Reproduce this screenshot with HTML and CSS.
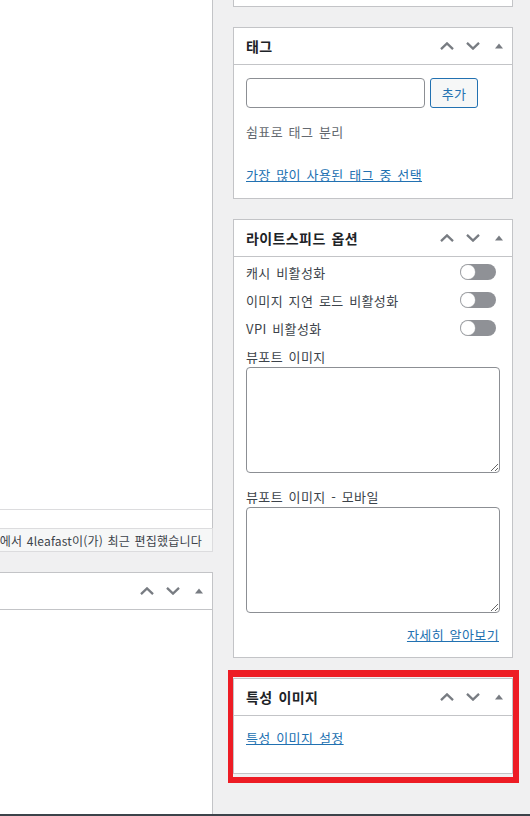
FILE: index.html
```html
<!DOCTYPE html>
<html lang="ko">
<head>
<meta charset="utf-8">
<title>편집</title>
<link rel="stylesheet" href="styles.css">
</head>
<body>
<div class="screen">
  <div class="main">
    <div class="editor"><div class="editor-frame"></div></div>
    <div class="status-info"><span>에서 4leafast이(가) 최근 편집했습니다</span></div>
    <div class="postbox main-box">
      <div class="postbox-header">
        <h2 class="hndle"></h2>
        <div class="handle-actions">
          <span class="hbtn"><svg width="14" height="8" viewBox="0 0 14 8"><polyline points="1,7.2 7,1.4 13,7.2" /></svg></span>
          <span class="hbtn"><svg width="14" height="8" viewBox="0 0 14 8"><polyline points="1,0.8 7,6.6 13,0.8" /></svg></span>
          <span class="hbtn"><svg class="tri" width="8" height="6" viewBox="0 0 8 6"><polygon points="0,5.5 4,0.5 8,5.5" /></svg></span>
        </div>
      </div>
      <div class="inside"></div>
    </div>
  </div>

  <div class="side">
    <div class="postbox stub"></div>

    <div class="postbox">
      <div class="postbox-header">
        <h2 class="hndle">태그</h2>
        <div class="handle-actions">
          <span class="hbtn"><svg width="14" height="8" viewBox="0 0 14 8"><polyline points="1,7.2 7,1.4 13,7.2" /></svg></span>
          <span class="hbtn"><svg width="14" height="8" viewBox="0 0 14 8"><polyline points="1,0.8 7,6.6 13,0.8" /></svg></span>
          <span class="hbtn"><svg class="tri" width="8" height="6" viewBox="0 0 8 6"><polygon points="0,5.5 4,0.5 8,5.5" /></svg></span>
        </div>
      </div>
      <div class="inside tags-inside">
        <div class="tag-row">
          <input class="tag-input" type="text">
          <button class="tag-add" type="button">추가</button>
        </div>
        <p class="howto">쉼표로 태그 분리</p>
        <a class="link tag-cloud-link" href="#">가장 많이 사용된 태그 중 선택</a>
      </div>
    </div>

    <div class="postbox">
      <div class="postbox-header">
        <h2 class="hndle">라이트스피드 옵션</h2>
        <div class="handle-actions">
          <span class="hbtn"><svg width="14" height="8" viewBox="0 0 14 8"><polyline points="1,7.2 7,1.4 13,7.2" /></svg></span>
          <span class="hbtn"><svg width="14" height="8" viewBox="0 0 14 8"><polyline points="1,0.8 7,6.6 13,0.8" /></svg></span>
          <span class="hbtn"><svg class="tri" width="8" height="6" viewBox="0 0 8 6"><polygon points="0,5.5 4,0.5 8,5.5" /></svg></span>
        </div>
      </div>
      <div class="inside ls-inside">
        <div class="opt-row"><span>캐시 비활성화</span><span class="toggle"><span class="knob"></span></span></div>
        <div class="opt-row"><span>이미지 지연 로드 비활성화</span><span class="toggle"><span class="knob"></span></span></div>
        <div class="opt-row"><span>VPI 비활성화</span><span class="toggle"><span class="knob"></span></span></div>
        <label class="field-label first">뷰포트 이미지</label>
        <textarea class="vpi-text"></textarea>
        <label class="field-label second">뷰포트 이미지 - 모바일</label>
        <textarea class="vpi-text"></textarea>
        <div class="learn-more"><a class="link" href="#">자세히 알아보기</a></div>
      </div>
    </div>

    <div class="postbox">
      <div class="postbox-header">
        <h2 class="hndle">특성 이미지</h2>
        <div class="handle-actions">
          <span class="hbtn"><svg width="14" height="8" viewBox="0 0 14 8"><polyline points="1,7.2 7,1.4 13,7.2" /></svg></span>
          <span class="hbtn"><svg width="14" height="8" viewBox="0 0 14 8"><polyline points="1,0.8 7,6.6 13,0.8" /></svg></span>
          <span class="hbtn"><svg class="tri" width="8" height="6" viewBox="0 0 8 6"><polygon points="0,5.5 4,0.5 8,5.5" /></svg></span>
        </div>
      </div>
      <div class="inside featured-inside">
        <a class="link" href="#">특성 이미지 설정</a>
      </div>
    </div>
  </div>

  <div class="highlight"></div>
</div>
<div class="bottom-bar"></div>
</body>
</html>
```

FILE: styles.css
```css
* { box-sizing: border-box; }

html, body {
  margin: 0;
  padding: 0;
}

body {
  width: 530px;
  height: 816px;
  overflow: hidden;
  background: #f0f0f1;
  font-family: "Noto Sans CJK KR", "Noto Sans", sans-serif;
  font-size: 13px;
  letter-spacing: 0.4px;
  word-spacing: 1.5px;
  color: #3c434a;
}

.screen {
  position: relative;
  display: flex;
  height: 814px;
  overflow: hidden;
}

.main {
  width: 213px;
  flex: none;
  display: flex;
  flex-direction: column;
}

.editor {
  height: 528px;
  background: #fff;
  border-right: 1px solid #c3c4c7;
}

.editor-frame {
  height: 510px;
  border-bottom: 1px solid #dcdcde;
}

.status-info {
  height: 24px;
  display: flex;
  justify-content: flex-end;
  align-items: center;
  overflow: hidden;
  white-space: nowrap;
  background: #f6f7f7;
  border: 1px solid #dcdcde;
  border-left: none;
  padding-right: 10px;
  font-size: 12px;
  letter-spacing: 0.2px;
  word-spacing: 1px;
  color: #3c434a;
}

.side {
  width: 280px;
  flex: none;
  margin-left: 20px;
  display: flex;
  flex-direction: column;
}

.postbox {
  background: #fff;
  border: 1px solid #c3c4c7;
  margin-bottom: 20px;
}

.stub {
  height: 7px;
  border-top: none;
}

.main-box {
  margin-top: 20px;
  margin-bottom: 0;
  flex: 1;
  border-left: none;
  border-bottom: none;
}

.postbox-header {
  height: 37px;
  display: flex;
  align-items: center;
  justify-content: space-between;
  border-bottom: 1px solid #c3c4c7;
}

.hndle {
  margin: 0;
  padding: 0 12px;
  font-size: 14px;
  font-weight: 600;
  line-height: 36px;
  color: #1d2327;
}

.handle-actions {
  display: flex;
  height: 36px;
}

.hbtn {
  width: 26px;
  height: 36px;
  display: flex;
  align-items: center;
  justify-content: center;
}

.hbtn polyline {
  fill: none;
  stroke: #787c82;
  stroke-width: 2.3;
}

.hbtn polygon {
  fill: #787c82;
}

.inside {
  padding: 0 12px;
}

.link {
  color: #2271b1;
  text-decoration: underline;
  line-height: 20px;
}

/* tags */
.tags-inside {
  padding-top: 13px;
  padding-bottom: 13px;
}

.tag-row {
  display: flex;
  gap: 5px;
}

.tag-input {
  width: 179px;
  height: 30px;
  margin: 0;
  border: 1px solid #8c8f94;
  border-radius: 4px;
  background: #fff;
}

.tag-add {
  width: 48px;
  height: 30px;
  margin: 0;
  padding: 0;
  border: 1px solid #2271b1;
  border-radius: 3px;
  background: #f6f7f7;
  color: #2271b1;
  font-family: inherit;
  font-size: 13px;
  letter-spacing: 0.4px;
}

.howto {
  margin: 14px 0 0;
  line-height: 20px;
  color: #646970;
}

.tag-cloud-link {
  display: inline-block;
  margin-top: 23px;
}

/* litespeed */
.ls-inside {
  padding-top: 1px;
  padding-bottom: 12px;
  display: flex;
  flex-direction: column;
}

.opt-row {
  height: 28px;
  display: flex;
  align-items: center;
  justify-content: space-between;
  padding-right: 4px;
}

.toggle {
  width: 36px;
  height: 16px;
  border-radius: 8px;
  background: #8f9196;
  display: flex;
  align-items: center;
  padding-left: 1px;
}

.knob {
  width: 14px;
  height: 14px;
  border-radius: 50%;
  background: #fff;
  box-shadow: 0 0 0 0.5px #b5b7ba;
}

.field-label {
  display: block;
  line-height: 18px;
  margin-bottom: 1px;
}

.field-label.first { margin-top: 6px; }
.field-label.second { margin-top: 15px; }

.vpi-text {
  display: block;
  width: 100%;
  height: 106px;
  margin: 0;
  border: 1px solid #8c8f94;
  border-radius: 4px;
  background: #fff;
}

.learn-more {
  margin-top: 12px;
  text-align: right;
  line-height: 20px;
  padding-right: 1px;
}

/* featured image */
.featured-inside {
  padding-top: 12px;
  padding-bottom: 25px;
  line-height: 20px;
}

.highlight {
  position: absolute;
  left: 228px;
  top: 670px;
  width: 291px;
  height: 113px;
  border-style: solid;
  border-color: #ed1c24;
  border-width: 7px 6px 6px 5px;
  pointer-events: none;
}

.bottom-bar {
  height: 2px;
  background: #3c434a;
}
```
